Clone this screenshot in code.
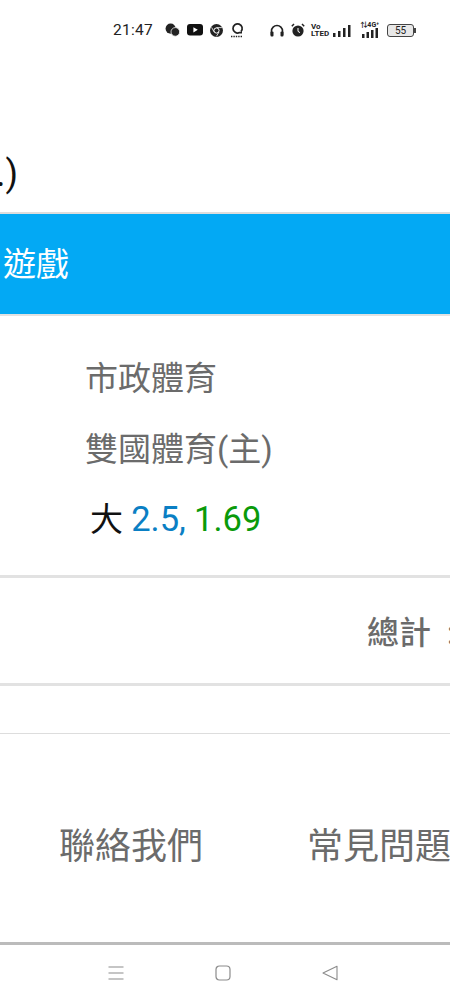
<div class="screen">
  <header class="statusbar">
    <span class="time">21:47</span>
    <div class="notif">
      <svg width="15" height="14" viewBox="0 0 16 14"><circle cx="6" cy="5.5" r="5.4" fill="#222"/><circle cx="11" cy="9" r="4.6" fill="#222" stroke="#fff" stroke-width="0.8"/></svg>
      <svg width="16" height="12" viewBox="0 0 16 12"><rect width="16" height="11.5" rx="3" fill="#111"/><path d="M6.4 3.2v5.2l4.4-2.6z" fill="#fff"/></svg>
      <svg width="13" height="13" viewBox="0 0 13 13"><circle cx="6.5" cy="6.5" r="6.5" fill="#222"/><circle cx="6.5" cy="6.5" r="2.6" fill="none" stroke="#fff" stroke-width="1"/><path d="M6.5 3.6h5.4M4 7.8 1.6 3.4M9 8l-2.6 4.4" stroke="#fff" stroke-width="0.8"/></svg>
      <svg width="14" height="16" viewBox="0 0 14 16"><path d="M11 9.5 A4.6 4.6 0 1 0 9.5 10.6 L12 10.6" fill="none" stroke="#222" stroke-width="1.7"/><path d="M1 14.5h12" stroke="#222" stroke-width="1.6" stroke-dasharray="1.4 1"/></svg>
    </div>
    <div class="system">
      <svg width="14" height="13" viewBox="0 0 14 13"><path d="M1.5 11V7a5.5 5.5 0 0 1 11 0v4" fill="none" stroke="#222" stroke-width="1.6"/><rect x="0.5" y="7.5" width="3" height="5" rx="1" fill="#222"/><rect x="10.5" y="7.5" width="3" height="5" rx="1" fill="#222"/></svg>
      <svg class="alarm" width="14" height="14" viewBox="0 0 14 14"><circle cx="7" cy="8" r="5.6" fill="#222"/><path d="M7 5v3.4l2 1.2" stroke="#fff" stroke-width="1" fill="none"/><path d="M0.8 3.2 3 1M13.2 3.2 11 1" stroke="#222" stroke-width="1.5"/></svg>
      <span class="volte">Vo<br />LTED</span>
      <svg class="signal" width="19" height="13" viewBox="0 0 19 13"><rect x="0" y="9" width="2.5" height="4" fill="#222"/><rect x="5" y="7" width="2.5" height="6" fill="#222"/><rect x="10" y="4" width="2.5" height="9" fill="#222"/><rect x="15" y="1" width="2.5" height="12" fill="#222"/></svg>
      <div class="net">
        <span class="net-label">⇅4G⁺</span>
        <svg width="17" height="10" viewBox="0 0 17 10"><rect x="0" y="6" width="2.5" height="4" fill="#222"/><rect x="4.5" y="4" width="2.5" height="6" fill="#222"/><rect x="9" y="2" width="2.5" height="8" fill="#222"/><rect x="13.5" y="0" width="2.5" height="10" fill="#222"/></svg>
      </div>
      <div class="battery"><span>55</span></div>
    </div>
  </header>

  <div class="title-row"><h1>.)</h1></div>

  <div class="banner">遊戲</div>

  <section class="match">
    <p class="league">市政體育</p>
    <p class="league">雙國體育(主)</p>
    <p class="odds"><span class="pick">大</span> <span class="blue">2.5,</span> <span class="green">1.69</span></p>
  </section>

  <div class="total-row"><span>總計&nbsp;&nbsp;:</span></div>
  <div class="empty-row"></div>

  <footer class="links">
    <a href="#contact">聯絡我們</a>
    <a href="#faq">常見問題</a>
  </footer>

  <nav class="softkeys">
    <svg width="16" height="16" viewBox="0 0 16 16"><path d="M0.5 2h15M0.5 8h15M0.5 14h15" stroke="#8c8c8c" stroke-width="1.1"/></svg>
    <svg width="16" height="16" viewBox="0 0 16 16"><rect x="1" y="1" width="14" height="14" rx="3.5" fill="none" stroke="#8c8c8c" stroke-width="1.2"/></svg>
    <svg width="16" height="16" viewBox="0 0 16 16"><path d="M1 8 15 1.2v13.6z" fill="none" stroke="#8c8c8c" stroke-width="1.1" stroke-linejoin="round"/></svg>
  </nav>
</div>

<style>
  :global(body) {
    margin: 0;
    background: #fff;
    overflow: hidden;
  }

  .screen {
    width: 450px;
    height: 1000px;
    display: flex;
    flex-direction: column;
    overflow: hidden;
    font-family: Roboto, "Noto Sans CJK TC", sans-serif;
    color: #6b6b6b;
  }

  /* STATUS BAR */
  .statusbar {
    height: 60px;
    display: flex;
    align-items: center;
    padding-left: 113px;
    flex: none;
    color: #222;
  }

  .time {
    font-size: 15.5px;
    width: 52px;
    letter-spacing: 0.3px;
  }

  .notif {
    display: flex;
    align-items: center;
    gap: 7px;
    width: 105px;
  }

  .system {
    display: flex;
    align-items: center;
  }

  .alarm { margin-left: 7px; }

  .volte {
    font-size: 8px;
    line-height: 7px;
    font-weight: 700;
    margin-left: 6px;
    width: 17px;
  }

  .signal { margin-left: 5px; }

  .net {
    display: flex;
    flex-direction: column;
    align-items: flex-end;
    width: 23px;
    margin-left: 4px;
  }

  .net-label {
    font-size: 7px;
    line-height: 6px;
    font-weight: 700;
  }

  .battery {
    width: 25px;
    height: 11px;
    margin-left: 8px;
    border: 1px solid #444;
    border-radius: 3px;
    background: #e8e8e8;
    font-size: 10px;
    line-height: 11px;
    text-align: center;
    position: relative;
  }

  .battery::after {
    content: '';
    position: absolute;
    right: -3px;
    top: 3px;
    width: 2px;
    height: 5px;
    background: #444;
  }

  /* TITLE */
  .title-row {
    height: 152px;
    flex: none;
    border-bottom: 2px solid #ddd;
    overflow: hidden;
  }

  h1 {
    margin: 89px 0 0 -4px;
    font-size: 36px;
    line-height: 50px;
    font-weight: 400;
    color: #111;
  }

  .banner {
    height: 100px;
    flex: none;
    padding-left: 3px;
    background: #03a9f4;
    color: #fff;
    font-size: 33px;
    line-height: 102px;
  }

  /* MATCH */
  .match {
    height: 264px;
    flex: none;
    box-sizing: border-box;
    border-top: 2px solid #e2e2e2;
    border-bottom: 3px solid #e2e2e2;
    padding: 39px 0 0 85px;
  }

  .league {
    margin: 0 0 23px;
    font-size: 33px;
    line-height: 48px;
  }

  .odds {
    margin: -2px 0 0;
    font-size: 33px;
    line-height: 48px;
    padding-left: 5px;
    white-space: nowrap;
  }

  .pick { color: #111; }
  .blue { color: #0a7fc4; font-size: 34.5px; }
  .green { color: #0a9a0a; font-size: 34.5px; }

  .total-row {
    height: 108px;
    flex: none;
    box-sizing: border-box;
    border-bottom: 3px solid #e2e2e2;
    padding: 0 0 2px 367px;
    display: flex;
    align-items: center;
    font-size: 32px;
    font-weight: 500;
    white-space: nowrap;
  }

  .empty-row {
    height: 47px;
    flex: none;
    border-bottom: 1px solid #ddd;
  }

  .links {
    height: 211px;
    flex: none;
    box-sizing: border-box;
    border-bottom: 3px solid #bbb;
    padding: 10px 0 0 59px;
    display: flex;
    gap: 104px;
    align-items: center;
    white-space: nowrap;
  }

  .links a {
    font-size: 36px;
    color: #6b6b6b;
    text-decoration: none;
  }

  .softkeys {
    flex: 1;
    display: flex;
    align-items: center;
    padding-left: 108px;
    gap: 91px;
  }
</style>
